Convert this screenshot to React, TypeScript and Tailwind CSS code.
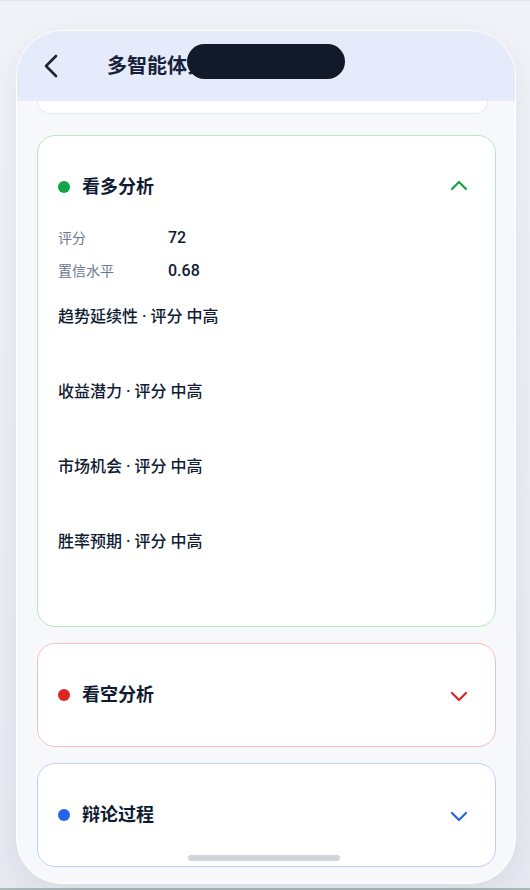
import React from 'react';

const font = { fontFamily: 'Roboto, "Noto Sans CJK SC", "Noto Sans", sans-serif' };

type Tone = 'green' | 'red' | 'blue';

const toneStyles: Record<Tone, { border: string; dot: string; icon: string }> = {
  green: { border: 'border-[#b8e6c1]', dot: 'bg-[#16a34a]', icon: 'text-[#16a34a]' },
  red: { border: 'border-[#f9bcbc]', dot: 'bg-[#dc2626]', icon: 'text-[#dc2626]' },
  blue: { border: 'border-[#bccffa]', dot: 'bg-[#2563eb]', icon: 'text-[#2563eb]' },
};

const Chevron = ({ up, className }: { up?: boolean; className?: string }) => (
  <svg width="20" height="20" viewBox="0 0 20 20" fill="none" className={className}>
    <path
      d={up ? 'M3 13 L10 6 L17 13' : 'M3 7 L10 14 L17 7'}
      stroke="currentColor"
      strokeWidth="2.2"
      strokeLinecap="round"
      strokeLinejoin="round"
      transform={up ? 'translate(0,-1)' : 'translate(0,1)'}
    />
  </svg>
);

const SectionHeader = ({ title, tone, open }: { title: string; tone: Tone; open?: boolean }) => (
  <div className="flex items-center h-[22px] pl-5 pr-[26px]">
    <span className={`w-3 h-3 rounded-full ${toneStyles[tone].dot}`} />
    <span className="ml-3 text-[18px] font-semibold text-[#0f1b33] leading-[22px]">{title}</span>
    <Chevron up={open} className={`ml-auto ${toneStyles[tone].icon}`} />
  </div>
);

const factors = ['趋势延续性', '收益潜力', '市场机会', '胜率预期'];

const App: React.FC = () => {
  return (
    <div
      className="h-[890px] w-full bg-gradient-to-b from-[#f2f3f8] to-[#e8eaf1] border-t border-[#e3e6ec] border-b-2 border-b-[#a9b9b6] pl-4 pr-[14px] pt-[29px] pb-[4px]"
      style={font}
    >
      <div className="relative h-full rounded-[46px] bg-[#f7f8fc] border border-white shadow-[0_10px_30px_rgba(30,41,80,0.08)] overflow-hidden flex flex-col">
        <div className="h-[70px] shrink-0 bg-[#e5ebfa] flex items-center pl-[26px]">
          <svg width="16" height="24" viewBox="0 0 16 24" fill="none" className="text-[#1a2437]">
            <path d="M13 2 L3 12 L13 22" stroke="currentColor" strokeWidth="2.6" strokeLinecap="round" strokeLinejoin="round" />
          </svg>
          <h1 className="ml-[48px] text-[20px] font-bold text-[#16213a] leading-none">多智能体分析</h1>
        </div>

        <div className="absolute top-[13px] left-[170px] w-[158px] h-[35px] rounded-full bg-[#121a2a]" />

        <div className="flex-1 pl-[20px] pr-[19px] flex flex-col">
          <div className="h-[13px] mr-2 bg-white rounded-b-[16px] border border-t-0 border-[#e6e9f0]" />

          <div className={`mt-[21px] bg-white rounded-[18px] border ${toneStyles.green.border} pt-10 pb-5`}>
            <SectionHeader title="看多分析" tone="green" open />
            <div className="mt-[29px] px-5 flex flex-col gap-[11px]">
              <div className="flex items-center h-[22px]">
                <span className="w-[110px] text-[14px] text-[#6b7890]">评分</span>
                <span className="text-[16px] font-medium text-[#0f1b33]">72</span>
              </div>
              <div className="flex items-center h-[22px]">
                <span className="w-[110px] text-[14px] text-[#6b7890]">置信水平</span>
                <span className="text-[16px] font-medium text-[#0f1b33]">0.68</span>
              </div>
            </div>
            <div className="mt-6 px-5 flex flex-col">
              {factors.map((f) => (
                <div key={f} className="h-[75px]">
                  <p className="text-[16px] font-medium text-[#0f1b33] leading-[22px]">
                    {f} · 评分 中高
                  </p>
                </div>
              ))}
            </div>
          </div>

          <div className={`mt-[16px] bg-white rounded-[18px] border ${toneStyles.red.border} py-10`}>
            <SectionHeader title="看空分析" tone="red" />
          </div>

          <div className={`mt-[16px] bg-white rounded-[18px] border ${toneStyles.blue.border} py-10`}>
            <SectionHeader title="辩论过程" tone="blue" />
          </div>
        </div>

        <div className="absolute bottom-[22px] left-[171px] w-[152px] h-[6px] rounded-full bg-[#d3d4d8]" />
      </div>
    </div>
  );
};

export default App;
